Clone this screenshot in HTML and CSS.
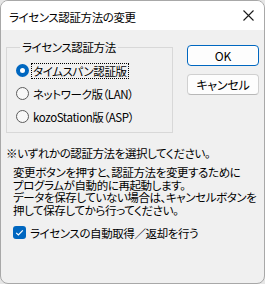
FILE: index.html
```html
<!DOCTYPE html>
<html lang="ja">
<head>
    <meta charset="UTF-8">
    <meta name="viewport" content="width=device-width, initial-scale=1.0">
    <title>ライセンス認証方法の変更</title>
    <link rel="stylesheet" href="styles.css">
</head>
<body>
    <div class="window">
        <div class="titlebar">
            <span class="title">ライセンス認証方法の変更</span>
            <span class="close">
                <svg width="11" height="11" viewBox="0 0 11 11"><path d="M0.5 0.5 L10.5 10.5 M10.5 0.5 L0.5 10.5" stroke="#1a1a1a" stroke-width="1.1" fill="none"/></svg>
            </span>
        </div>
        <div class="content">
            <div class="top-row">
                <fieldset class="group">
                    <legend>ライセンス認証方法</legend>
                    <div class="radio-row">
                        <span class="radio checked"></span>
                        <span class="radio-label focused">タイムスパン認証版</span>
                    </div>
                    <div class="radio-row">
                        <span class="radio"></span>
                        <span class="radio-label">ネットワーク版（LAN）</span>
                    </div>
                    <div class="radio-row">
                        <span class="radio"></span>
                        <span class="radio-label">kozoStation版（ASP）</span>
                    </div>
                </fieldset>
                <div class="buttons">
                    <button class="btn default">OK</button>
                    <button class="btn">キャンセル</button>
                </div>
            </div>
            <div class="note">※いずれかの認証方法を選択してください。</div>
            <div class="message">
                <div>変更ボタンを押すと、認証方法を変更するために</div>
                <div>プログラムが自動的に再起動します。</div>
                <div>データを保存していない場合は、キャンセルボタンを</div>
                <div>押して保存してから行ってください。</div>
            </div>
            <div class="check-row">
                <span class="checkbox">
                    <svg width="13" height="13" viewBox="0 0 13 13"><path d="M3.2 6.8 L5.4 9 L9.8 4.4" stroke="#fff" stroke-width="1.2" fill="none"/></svg>
                </span>
                <span class="check-label">ライセンスの自動取得／返却を行う</span>
            </div>
        </div>
    </div>
</body>
</html>
```

FILE: styles.css
```css
html, body {
    margin: 0;
    height: 100%;
}
body {
    background-color: #e6e6e6;
    font-family: "Noto Sans CJK JP", "Noto Sans", sans-serif;
    font-size: 11.5px;
    letter-spacing: -0.4px;
    font-feature-settings: "palt";
    color: #000;
}
.window {
    box-sizing: border-box;
    height: 284px;
    width: 265px;
    border: 1px solid #a8a8a8;
    border-radius: 8px;
    background-color: #f0f0f0;
    overflow: hidden;
    display: flex;
    flex-direction: column;
}
.titlebar {
    height: 29px;
    background-color: #fff;
    display: flex;
    align-items: center;
    justify-content: space-between;
    padding: 0 10px 0 8px;
    flex-shrink: 0;
}
.title {
    line-height: 16px;
    margin-top: 2px;
}
.close {
    display: flex;
    align-items: center;
    margin-top: -1px;
}
.content {
    padding: 9px 5px 0 5px;
}
.top-row {
    display: flex;
    justify-content: space-between;
}
.group {
    width: 167px;
    box-sizing: border-box;
    margin: 0;
    padding: 4px 0 4px 9px;
    border: 1px solid #d8d8d8;
    min-width: 0;
}
.group legend {
    margin-left: 4px;
    padding: 0 2px;
    line-height: 16px;
}
.radio-row {
    height: 23px;
    display: flex;
    align-items: center;
}
.radio {
    box-sizing: border-box;
    width: 13px;
    height: 13px;
    border-radius: 50%;
    border: 1px solid #5c5c5c;
    background-color: #f8f8f8;
    flex-shrink: 0;
}
.radio.checked {
    border: 4px solid #0067c0;
    background-color: #fff;
}
.radio-label {
    margin-left: 2px;
    padding: 0 1px;
    line-height: 14px;
    border: 1px dotted transparent;
    white-space: nowrap;
}
.radio-label.focused {
    border-color: #000;
}
.buttons {
    display: flex;
    flex-direction: column;
    gap: 8px;
    margin-top: 6px;
}
.btn {
    width: 72px;
    height: 21px;
    box-sizing: border-box;
    font-family: inherit;
    font-size: 12px;
    font-feature-settings: "palt";
    letter-spacing: -0.2px;
    color: #000;
    background-color: #fdfdfd;
    border: 1px solid #d0d0d0;
    border-bottom-color: #b8b8b8;
    border-radius: 4px;
    padding: 0;
}
.btn.default {
    border: 1px solid #0067c0;
    box-shadow: inset 0 0 0 1px #fff;
}
.note {
    margin-top: 13px;
    line-height: 14px;
    white-space: nowrap;
}
.message {
    margin-top: 6px;
    padding-left: 7px;
    white-space: nowrap;
}
.message div {
    height: 12.67px;
    line-height: 13px;
}
.check-row {
    margin-top: 9px;
    margin-left: 7px;
    display: flex;
    align-items: center;
}
.checkbox {
    width: 13px;
    height: 13px;
    border-radius: 3px;
    background-color: #0067c0;
    display: flex;
    flex-shrink: 0;
}
.check-label {
    margin-left: 4px;
    line-height: 14px;
    white-space: nowrap;
}
```
